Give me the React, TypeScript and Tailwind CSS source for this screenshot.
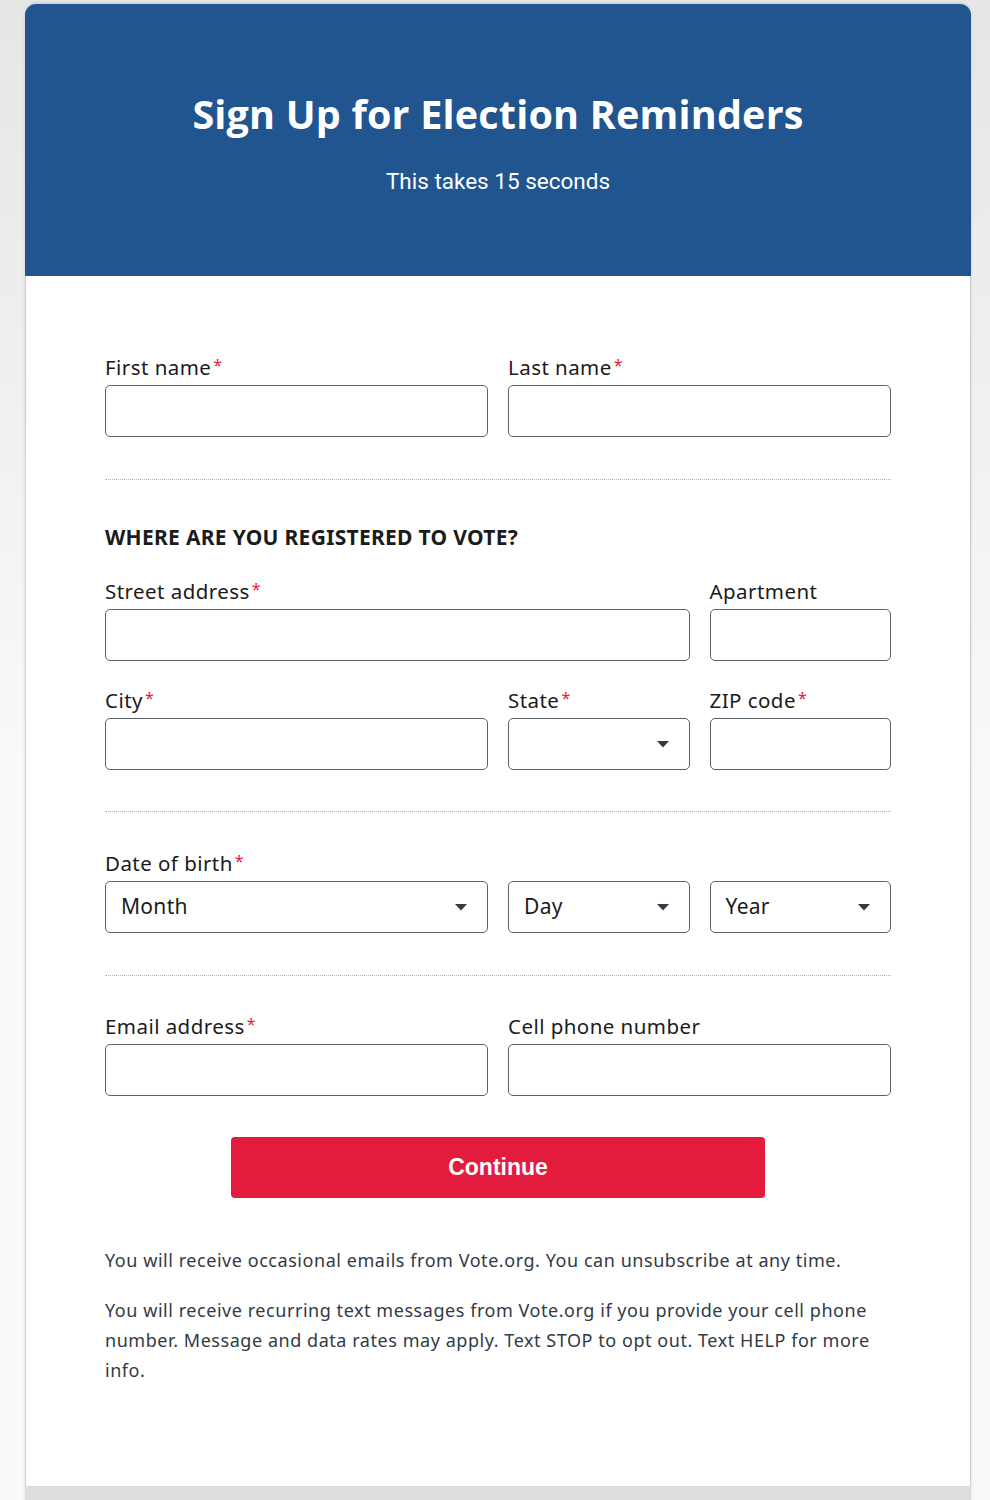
import React from "react";

const Req = () => <span className="text-[#e31c3d] text-[16px] align-top ml-[2px] leading-none relative top-[2px]">*</span>;

function Label({ text, req }: { text: string; req?: boolean }) {
  return (
    <label className="block text-[20.5px] leading-[24px] text-[#1b1b1b] tracking-[0.45px] mb-[6px]">
      {text}
      {req && <Req />}
    </label>
  );
}

function Input() {
  return <div className="h-[52px] w-full rounded-[5px] border border-[#5b616b] bg-white" />;
}

function Caret() {
  return (
    <svg width="12" height="7" viewBox="0 0 12 7" className="shrink-0">
      <path d="M0 0 L12 0 L6 6.5 Z" fill="#323a45" />
    </svg>
  );
}

function Select({ text }: { text?: string }) {
  return (
    <div className="h-[52px] w-full rounded-[5px] border border-[#5b616b] bg-white flex items-center justify-between pl-[15px] pr-[20px]">
      <span className="text-[21px] text-[#1b1b1b] tracking-[0.3px]">{text ?? ""}</span>
      <Caret />
    </div>
  );
}

function Sep() {
  return <div className="border-t border-dotted border-[#aeb0b5]" />;
}

export default function App() {
  return (
    <div
      className="min-h-[1500px] bg-gradient-to-b from-[#e6e6e6] via-[#f9f9f9] to-[#f9f9f9] pt-[4px] px-[25px] overflow-hidden"
      style={{ fontFamily: '"Noto Sans", "Open Sans", sans-serif' }}
    >
      <div className="w-[946px] rounded-t-[12px] border-x border-[#cfd0d2] bg-white shadow-[0_-1px_3px_rgba(0,0,0,0.12)]">
        <div className="bg-[#215590] rounded-t-[11px] h-[272px] flex flex-col items-center pt-[85px] -mx-px">
          <h1 className="text-white font-bold text-[39.5px] leading-[50px] tracking-[0.2px]" style={{ fontFamily: '"Open Sans", sans-serif' }}>
            Sign Up for Election Reminders
          </h1>
          <p className="text-white text-[22.5px] leading-[28px] mt-[28px]" style={{ fontFamily: 'Roboto, sans-serif' }}>
            This takes 15 seconds
          </p>
        </div>

        <div className="px-[79px] pt-[79px] pb-[101px]">
          <div className="grid grid-cols-4 gap-x-[20px]">
            <div className="col-span-2">
              <Label text="First name" req />
              <Input />
            </div>
            <div className="col-span-2">
              <Label text="Last name" req />
              <Input />
            </div>
          </div>

          <div className="mt-[42px]">
            <Sep />
          </div>

          <h2 className="mt-[45px] text-[21px] leading-[24px] font-bold text-[#1b1b1b] uppercase tracking-[0.3px]">
            Where are you registered to vote?
          </h2>

          <div className="grid grid-cols-4 gap-x-[20px] gap-y-[27px] mt-[30px]">
            <div className="col-span-3">
              <Label text="Street address" req />
              <Input />
            </div>
            <div>
              <Label text="Apartment" />
              <Input />
            </div>
            <div className="col-span-2">
              <Label text="City" req />
              <Input />
            </div>
            <div>
              <Label text="State" req />
              <Select />
            </div>
            <div>
              <Label text="ZIP code" req />
              <Input />
            </div>
          </div>

          <div className="mt-[41px]">
            <Sep />
          </div>

          <div className="mt-[39px]">
            <Label text="Date of birth" req />
            <div className="grid grid-cols-4 gap-x-[20px]">
              <div className="col-span-2">
                <Select text="Month" />
              </div>
              <Select text="Day" />
              <Select text="Year" />
            </div>
          </div>

          <div className="mt-[42px]">
            <Sep />
          </div>

          <div className="grid grid-cols-4 gap-x-[20px] mt-[38px]">
            <div className="col-span-2">
              <Label text="Email address" req />
              <Input />
            </div>
            <div className="col-span-2">
              <Label text="Cell phone number" />
              <Input />
            </div>
          </div>

          <div className="flex justify-center mt-[41px]">
            <button
              className="w-[534px] h-[61px] rounded-[4px] bg-[#e31c3d] text-white text-[23px] font-bold"
              style={{ fontFamily: '"Liberation Sans", Arial, sans-serif' }}
            >
              Continue
            </button>
          </div>

          <div className="mt-[47px] text-[18px] leading-[30px] text-[#323a45] tracking-[0.55px]">
            <p>You will receive occasional emails from Vote.org. You can unsubscribe at any time.</p>
            <p className="mt-[20px]">
              You will receive recurring text messages from Vote.org if you provide your cell phone number. Message and data rates may apply. Text STOP to opt out. Text HELP for more info.
            </p>
          </div>
        </div>
        <div className="h-[40px] bg-[#dcdddf] -mx-px" />
      </div>
    </div>
  );
}
